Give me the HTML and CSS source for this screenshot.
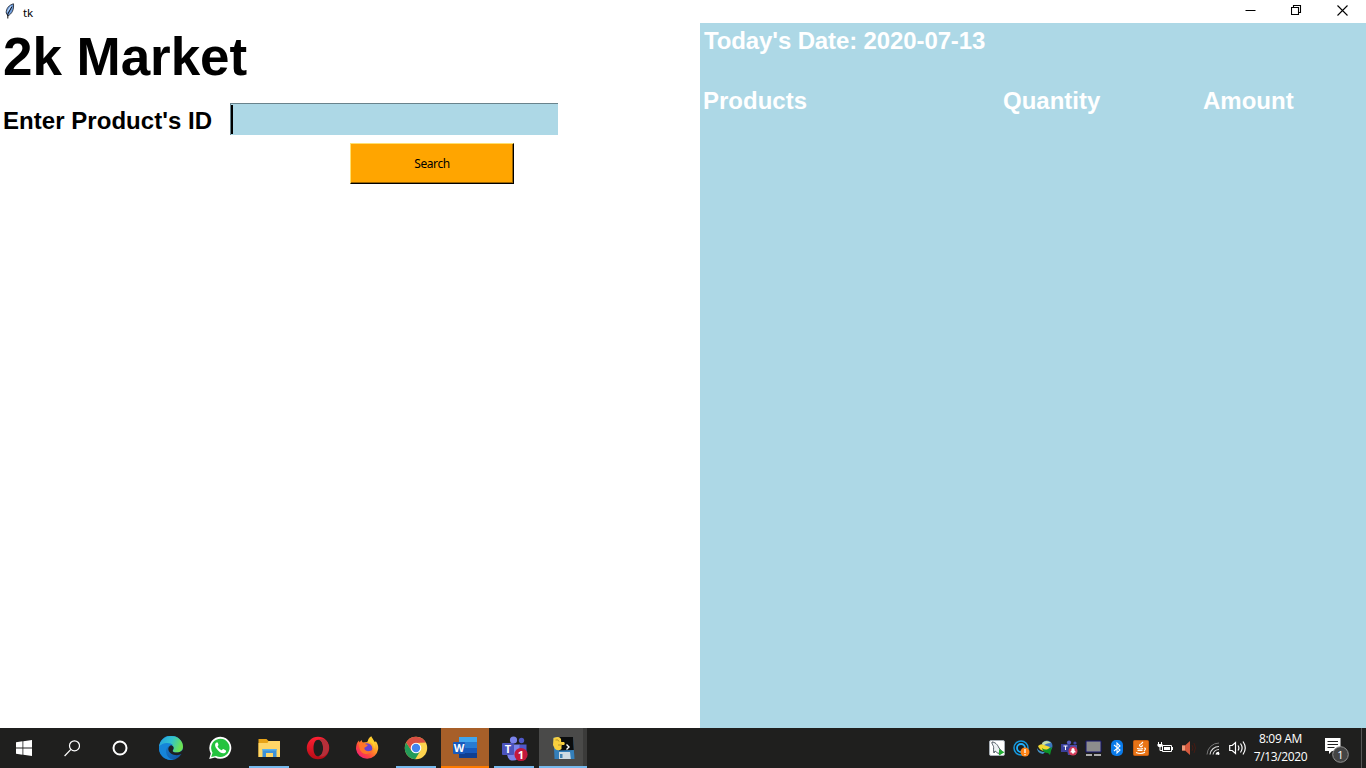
FILE: index.html
```html
<!DOCTYPE html>
<html lang="en">
<head>
<meta charset="utf-8">
<title>tk</title>
<link rel="stylesheet" href="styles.css">
</head>
<body>
<div class="screen">
  <header class="titlebar">
    <svg class="feather" width="10" height="16" viewBox="0 0 10 16"><path d="M8.500 .8C4 2 1 5.500 1.200 10L3 13C7 10.500 9 7 8.500.8Z" fill="#6f9fe0" stroke="#2a2f38" stroke-width=".9"/><path d="M7 3.500 2.800 11V15.500" fill="none" stroke="#111" stroke-width="1"/><path d="M6 3 2.500 8.500" stroke="#d4e7ff" stroke-width=".9"/></svg>
    <span class="caption">tk</span>
    <div class="controls">
      <button class="control" aria-label="Minimize"><svg width="11" height="11" viewBox="0 0 11 11"><path d="M.5 5.500h10" stroke="#000"/></svg></button>
      <button class="control" aria-label="Restore"><svg width="11" height="11" viewBox="0 0 11 11"><path d="M.5 2.500h7v7h-7zM2.500 2.500v-2h7v7h-2" fill="none" stroke="#000" stroke-width="1.100"/></svg></button>
      <button class="control" aria-label="Close"><svg width="11" height="11" viewBox="0 0 11 11"><path d="M.5.5l10 10M10.500.5l-10 10" stroke="#000" stroke-width="1.100"/></svg></button>
    </div>
  </header>
  <main class="window">
    <section class="left">
      <h1>2k Market</h1>
      <div class="field">
        <label for="pid">Enter Product's ID</label>
        <div class="entry" id="pid"><span class="caret"></span></div>
      </div>
      <button class="search">Search</button>
    </section>
    <section class="right">
      <div class="date">Today's Date: 2020-07-13</div>
      <div class="columns"><span>Products</span><span>Quantity</span><span>Amount</span></div>
    </section>
  </main>
  <footer class="taskbar">
    <div class="system">
      <div class="sys"><svg width="16" height="16" viewBox="0 0 16 16"><path fill="#fff" d="M0 2.200 6.500 1.300V7.500H0zM7.300 1.200 16 0V7.500H7.300zM0 8.400h6.500v6.300L0 13.800zM7.300 8.400H16V16l-8.700-1.200z"/></svg></div>
      <div class="sys"><svg width="16" height="17" viewBox="0 0 16 17"><g fill="none" stroke="#fff" stroke-width="1.200"><circle cx="10.500" cy="5.800" r="5"/><path d="M6.900 9.400.6 16"/></g></svg></div>
      <div class="sys"><svg width="16" height="16" viewBox="0 0 16 16"><circle cx="8" cy="8" r="6.500" fill="none" stroke="#fff" stroke-width="2"/></svg></div>
    </div>
    <div class="apps">
      <div class="app"><svg width="24" height="24" viewBox="0 0 24 24">
        <defs><linearGradient id="e1" x1="0" x2="1" y1="0" y2=".3"><stop offset="0" stop-color="#259fe0"/><stop offset=".55" stop-color="#32c3cf"/><stop offset="1" stop-color="#6be253"/></linearGradient><linearGradient id="e2" x1="0" x2="1" y1="0" y2="1"><stop offset="0" stop-color="#1b8fde"/><stop offset="1" stop-color="#0f4f9e"/></linearGradient></defs>
        <path d="M0 11A12 12 0 1 1 24 12q-.2 2-1.200 3l-.4 3A12 12 0 0 1 0 11z" fill="url(#e2)"/>
        <path d="M0 11C1 4 6 0 12 0c7 0 12 5 12 10.500 0 4-3 6-6.500 6-3 0-4.500-1-3.500-2.500C16 11 13 8 9 8 5 8 1 9 0 11z" fill="url(#e1)"/>
        <path d="M0 11C3 6 11 6 14 9c-4-.5-7 3-7 6 0 5 4 8.500 7.500 8.700C6 25-.5 19 0 11z" fill="#1685d8"/>
        <path d="M12 9.200c2.500.3 3.500 3 1.800 5 -.7 1.600 1.200 2.400 3.700 2.400 2.400 0 4-.8 5.800-2.200L24 17.500l-1.500.6C17 21 9.500 18 9.300 13c.1-1.700 1-3.100 2.700-3.800z" fill="#1f2022"/></svg></div>
      <div class="app"><svg width="24" height="24" viewBox="0 0 24 24"><path d="M1.200 23 2.800 17.400A11 11 0 1 1 7 21.500z" fill="#fff"/><path d="M3.200 21 4.500 16.700A9.200 9.200 0 1 1 8 20z" fill="#25c33f"/><path d="M8.500 6.500c-2 1.200-2 3.500.3 6.500 2.700 3.600 6 5.200 8.300 3.700 1.100-.8 1.200-2 .8-2.300l-2.500-1.300c-.8-.2-1.200 1.400-1.900 1.200-1.800-.7-3-1.900-3.900-3.700-.2-.6 1.100-1 .9-1.900L9.700 6.500z" fill="#fff"/></svg></div>
      <div class="app running"><svg width="24" height="24" viewBox="0 0 24 24"><path d="M1.500 3h8l2 2h11v16h-21z" fill="#e8a317"/><path d="M1.500 7h9l1-2h11.500v16H1.500z" fill="#ffd667"/><path d="M5.500 13h14v8h-3.500v-4h-7v4H5.500z" fill="#3d91d8"/><path d="M5.500 13h14v1.500h-14z" fill="#57b1ef"/></svg></div>
      <div class="app"><svg width="24" height="24" viewBox="0 0 24 24"><defs><linearGradient id="op" x2="0" y2="1"><stop stop-color="#ff2033"/><stop offset="1" stop-color="#b70c16"/></linearGradient></defs><path fill="url(#op)" fill-rule="evenodd" d="M12 .7a11.200 11.300 0 1 0 0 22.600 11.200 11.300 0 0 0 0-22.600zm.3 3c3 0 4.800 3.300 4.800 8.300s-1.800 8.300-4.800 8.300S7.500 17 7.500 12s1.800-8.300 4.800-8.300z"/><path d="M12.500 3.500C15 2 18 2.500 20.500 5c3 4 3.500 10-1 14-2 1.700-5 2-7 1 3-.5 4.600-3.500 4.600-8s-1.600-7.500-4.600-8.500z" fill="#b5303a"/></svg></div>
      <div class="app"><svg width="24" height="24" viewBox="0 0 24 24"><defs><linearGradient id="ff" x1="1" x2=".1" y1="0" y2="1"><stop stop-color="#fff44f"/><stop offset=".4" stop-color="#ff9f24"/><stop offset=".7" stop-color="#ff453c"/><stop offset="1" stop-color="#ed168b"/></linearGradient></defs><path d="M1 13C1 9 2 6 4 4.500l.5 2L6.500 4l1 2.500 5-.5c.5-3 2-5 4-5.700 0 3 2 4 3 5.500l1.500-.3c1.500 2 2.500 4.500 2.200 7.500A11.200 11.200 0 0 1 1 13z" fill="url(#ff)"/><circle cx="12" cy="12.500" r="5.300" fill="#6742d2"/><path d="M4 7c3-1 5 0 6 1l3 1-2 2c-1 0-2 .8-1.500 2 1 2.500 5 3 8.500.5-1 4.500-7 6-11 3C4.500 14.500 4 11 4 7z" fill="#ff7428"/><path d="M12.500 6c5 0 6.500 3 6.500 7 2-4 0-9-2.500-12-1.300 1.500-3.500 3-4 5z" fill="#ffcf2c"/></svg></div>
      <div class="app running"><svg width="24" height="24" viewBox="0 0 24 24"><circle cx="12" cy="12" r="11.200" fill="#fdd34d"/><path d="M2.200 6.500A11.200 11.200 0 0 0 11.200 23.200L16.500 14.500 7.700 14.700z" fill="#239b59"/><path d="M2.200 6.500A11.200 11.200 0 0 1 21.800 6.600L12 7l-4.400 8z" fill="#d94f43"/><circle cx="12" cy="12" r="5.300" fill="#fff"/><circle cx="12" cy="12" r="4.200" fill="#4385ee"/></svg></div>
      <div class="app running attention"><svg width="24" height="24" viewBox="0 0 24 24"><path fill="#40a5ee" d="M6 1h18v6H6z"/><path fill="#287bd2" d="M6 6h18v6H6z"/><path fill="#185abd" d="M6 12h18v5H6z"/><path fill="#103f91" d="M6 17h18v5H6z"/><rect y="6" width="12" height="12" rx="1" fill="#185abd"/><text x="6" y="15.600" text-anchor="middle" class="letter">W</text></svg></div>
      <div class="app running"><svg class="teams" width="28" height="28" viewBox="0 0 28 28"><circle cx="13.500" cy="6" r="3.600" fill="#7b83eb"/><circle cx="21.500" cy="6.500" r="2.700" fill="#5059c9"/><path d="M19 10.500h7.500v8q-2 5-7 4z" fill="#5059c9"/><path d="M7 10.500h12.500v10q-1 6-6.500 6-5 0-6-6z" fill="#7b83eb"/><rect x="2" y="9" width="12" height="12" rx="1" fill="#4b53bc"/><text x="8" y="18.800" text-anchor="middle" class="letter">T</text><circle cx="21" cy="20.500" r="6.600" fill="#c4183c"/><text x="21" y="24.500" text-anchor="middle" class="count">1</text></svg></div>
      <div class="app running active"><svg class="python" width="24" height="24" viewBox="0 0 24 24"><path d="M2.500 1.500 22 1l1.500 22H3.500z" fill="#347fba"/><path d="M8 1h14l.8 13-14.800.5z" fill="#0b0d0e"/><path d="M8 16h11l.8 7H8z" fill="#cfdbe2"/><path d="M9 18h2.500v4H9z" fill="#4283b2"/><path d="M2.500 2q6-2.500 7.500 1l.2 3H13q1.500 1.500 0 3h-2.500v4q-3 2.500-6.500 0L2 9z" fill="#f8cf3e"/><path d="M4.500 4q3-1 3.500 1.500M7 9h4" stroke="#b8952c" fill="none"/><path d="m15.500 8.500 2.500 2.500-2.500 2.500" stroke="#fff" stroke-width="1.400" fill="none"/></svg></div>
    </div>
    <div class="tray">
      <div><svg width="16" height="16" viewBox="0 0 16 16"><rect x=".5" y=".5" width="15" height="15" rx="1.500" fill="#fff" stroke="#a7aeb5"/><path d="M3 2c3 0 5.500 2.500 7 6l3 3.500-3 .5 1 2.500C8 13 7 11.500 6 11l-1 2C4 10 5 8 4.500 6.500 4 5 2.500 3.500 3 2z" fill="#edf1f3" stroke="#404b55" stroke-width=".9"/><path d="m10 9 5.500 3.300L10 15.600z" fill="#22ad33"/></svg></div>
      <div><svg width="17" height="17" viewBox="0 0 17 17"><circle cx="8" cy="8" r="7" fill="none" stroke="#1599df" stroke-width="1.500"/><circle cx="8" cy="8" r="4" fill="none" stroke="#1fb1ff" stroke-width="1.800"/><circle cx="12" cy="12" r="4.500" fill="#ff8315"/><path d="M12 9v4M12 14v1.200" stroke="#fff" stroke-width="1.300"/></svg></div>
      <div><svg class="globe" width="16" height="16" viewBox="0 0 16 16"><circle cx="10" cy="6" r="5.500" fill="#3b76be"/><path d="M5 3q4.500-4 9 0-5 0-8 3z" fill="#c6dda9"/><path d="M1 6q3-3 6-1l6 2-3 4q-7 1-9-5z" fill="#f1d932"/><path d="M0 8q2 4 8 4l-2 2Q0 13 0 8z" fill="#4593c7"/><path d="M5 8q3 2.500 6 1l4-2-2 8-2-2q-5 0-6-5z" fill="#0c942a"/></svg></div>
      <div><svg width="17" height="16" viewBox="0 0 17 16"><circle cx="8" cy="2.500" r="2.100" fill="#5960c2"/><circle cx="14" cy="3" r="1.600" fill="#4048a7"/><path d="M5 5h11v7l-5 3H7z" fill="#454ba5"/><rect y="4" width="9" height="8" fill="#393f9a"/><path d="M2.500 6h4M4.500 6v4" stroke="#fff"/><circle cx="12" cy="11" r="4.500" fill="#d13b59"/><path d="M9.500 12.500v-1l1-1V9q1.500-2 3 0v1.500l1 1v1zM11 12.500h2v1h-2z" fill="#fff"/></svg></div>
      <div><svg width="17" height="17" viewBox="0 0 17 17"><path d="M1 1h15v11H1z" fill="#8d8d8d" stroke="#17176f"/><path d="M1 14h6v2H1zM9 14h7v2H9z" fill="#ababab"/></svg></div>
      <div><svg width="12" height="16" viewBox="0 0 12 16"><rect width="12" height="16" rx="5" fill="#0a7bea"/><path d="m3 5 6 5-3 3V3l3 3-6 5" fill="none" stroke="#fff" stroke-width="1.100"/></svg></div>
      <div><svg width="16" height="16" viewBox="0 0 16 16"><rect x=".5" y=".5" width="15" height="15" rx="1" fill="#e97416" stroke="#c85c0e"/><path d="M8 7q-3-2 0-3l2-2M8 7q2-1 1-2M4 8.500q4 1 6 0M4.500 10.500h5M3 12.500q5 2 9-.2M11 8q3 0 0 3" stroke="#fff" stroke-width="1.100" fill="none"/></svg></div>
      <div><svg width="17" height="14" viewBox="0 0 17 14"><path d="M5.500 4.500h9v6h-9z" fill="none" stroke="#fff"/><path d="M7 6h6v3H7zM15 6h1v3h-1z" fill="#fff"/><path d="M1.500 1v2M4.500 1v2" stroke="#fff"/><path d="M.5 3h5v2q-2.500 2.500-5 0z" fill="#fff"/><path d="M3 6v3.500h2" fill="none" stroke="#fff"/></svg></div>
      <div><svg class="muted" width="16" height="16" viewBox="0 0 16 16"><path d="M1 5.500h3l5-4.500v14l-5-4.500H1z" fill="#d65a3e"/><path d="M1 5.500h3v5H1z" fill="#ee9a79"/><path d="M11 5q2 3 0 6M13 3q3 5 0 10" stroke="#451b13" fill="none"/></svg></div>
      <div><svg width="14" height="14" viewBox="0 0 14 14"><g fill="none"><path d="M1 13.500A12 12 0 0 1 13 2" stroke="#777"/><path d="M4 13.500a9 9 0 0 1 9-8M7 13.500a6 6 0 0 1 6-5" stroke="#ddd" stroke-width="1.100"/><path d="M10 13.500a3 3 0 0 1 3-2" stroke="#fff" stroke-width="1.300"/></g><circle cx="12.300" cy="12.800" r="1.200" fill="#fff"/></svg></div>
      <div><svg width="17" height="16" viewBox="0 0 17 16"><path d="M.7 5.500h2.500L6.500 2.500v11l-3.300-3H.7zM9 5.500q1.800 2.500 0 5M11.500 3.500q3.200 4.500 0 9M14 1.500q4.500 6.500 0 13" fill="none" stroke="#fff" stroke-width="1.200"/></svg></div>
    </div>
    <div class="clock"><span>8:09 AM</span><span class="day">7/13/2020</span></div>
    <div class="notice"><svg width="28" height="28" viewBox="0 0 28 28"><path d="M2 3h15.500v13H9l-3 3v-3H2z" fill="#fff"/><path d="M4.500 6.500h10.500M4.500 9.500h10.500M4.500 12.500h7" stroke="#222"/><circle cx="17.500" cy="19.500" r="7.800" fill="#444" stroke="#929292"/><text x="17.500" y="23.500" text-anchor="middle" class="badge">1</text></svg></div>
    <div class="desktop"></div>
  </footer>
</div>
</body>
</html>
```
FILE: styles.css
```css
* { box-sizing: border-box; }
body { margin: 0; overflow: hidden; background: #fff; color: #000; font-family: "Liberation Sans", Arial, sans-serif; }
button { border: 0; padding: 0; background: none; font: inherit; color: inherit; }
svg { display: block; flex: none; }
.screen { width: 1366px; height: 768px; display: flex; flex-direction: column; }
.titlebar { height: 23px; display: flex; align-items: center; padding-left: 5px; }
.feather { margin-top: -1px; }
.caption { margin: 1px 0 0 8px; font: 11.5px "Noto Sans", sans-serif; letter-spacing: -.2px; }
.controls { display: flex; margin: -2px 1px 0 auto; height: 21px; }
.control { width: 46px; display: flex; align-items: center; justify-content: center; }
.window { flex: 1; min-height: 0; display: flex; }
.left { width: 700px; padding-left: 3px; }
h1 { margin: 3px 0 0; font-size: 53px; line-height: 61px; white-space: nowrap; letter-spacing: -.05px; }
.field { display: flex; margin-top: 16px; height: 32px; }
label { width: 227px; font-size: 24px; font-weight: bold; line-height: 36px; letter-spacing: .04px; }
.entry { width: 328px; height: 32px; background: #add8e6; border-top: 1px solid #69838c; border-left: 1px solid #69838c; padding: 1px 0; }
.caret { display: block; width: 2px; height: 29px; background: #000; }
.search { display: block; width: 164px; height: 41px; margin: 8px 0 0 347px; background: #ffa500; border: 1px solid #000; border-top-color: #ffe070; border-left-color: #ffe070; box-shadow: inset -1px -1px #996300; font: 12px "Noto Sans", sans-serif; letter-spacing: -.4px; }
.right { flex: 1; background: #add8e6; color: #fff; font-size: 24px; font-weight: bold; line-height: 28px; padding: 4px 0 0 3px; }
.date { padding-left: 1px; letter-spacing: -.12px; }
.columns { display: grid; grid-template-columns: 300px 200px 1fr; margin-top: 32px; }
.taskbar { height: 40px; background: #1f1f1e; color: #fff; display: flex; }
.system { display: flex; width: 146px; }
.sys { width: 48px; display: flex; align-items: center; justify-content: center; }
.apps { display: flex; }
.app { width: 49px; border-bottom: 2px solid transparent; display: flex; align-items: center; justify-content: center; padding-top: 2px; }
.running { width: 40px; margin: 0 4px 0 5px; border-color: #76b9ed; }
.attention { width: 48px; margin: 0 0 0 1px; background: #a75f29; border-color: #ff7b00; }
.active { width: 48px; margin: 0 0 0 1px; background: #4a4a49; box-shadow: inset -4px 0 #3b3b3a; }
.letter { font: bold 11px "Open Sans", sans-serif; fill: #fff; }
.count { font: bold 11px "Open Sans", sans-serif; fill: #fff; }
.tray { display: flex; margin-left: auto; }
.tray > div { width: 24px; display: flex; justify-content: center; align-items: center; }
.globe { margin-left: -1px; }
.muted { margin-right: 1px; }
.clock { width: 64px; display: flex; flex-direction: column; align-items: center; font: 12px/18px "Open Sans", sans-serif; letter-spacing: -.3px; padding: 2px 1px 0 0; }
.day { letter-spacing: -.35px; }
.notice { width: 48px; display: flex; align-items: center; justify-content: center; padding-top: 2px; }
.badge { font: 11px "Open Sans", sans-serif; fill: #fff; }
.desktop { width: 5px; border-left: 1px solid #565656; }
```
